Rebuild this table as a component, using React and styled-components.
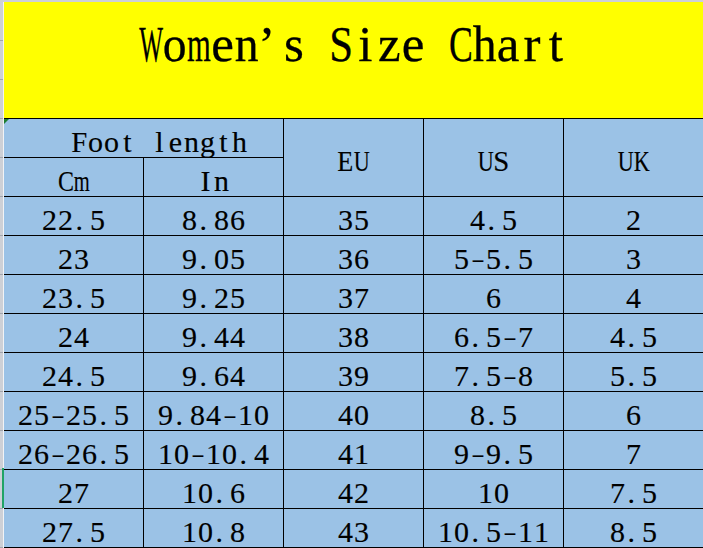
import React from "react";
import styled, { createGlobalStyle } from "styled-components";

const GlobalStyle = createGlobalStyle`
  html, body { margin: 0; padding: 0; background: #fff; }
  body { overflow: hidden; }
`;

// Liberation Serif (Times) advance widths, 1/1000 em
const ADV = {
  " ": 250, "’": 333, "-": 333, ".": 250,
  "0": 500, "1": 500, "2": 500, "3": 500, "4": 500, "5": 500, "6": 500, "7": 500, "8": 500, "9": 500,
  C: 667, E: 611, F: 556, I: 333, K: 722, S: 556, U: 722, W: 944,
  a: 444, e: 444, g: 500, h: 500, i: 278, l: 278, m: 778, n: 500, o: 500, r: 333, s: 389, t: 278, z: 444,
};

const Sheet = styled.div`
  width: 703px;
  height: 548px;
  overflow: hidden;
  display: flex;
  flex-direction: column;
  background: #fff;
  font-family: "Liberation Serif", "Times New Roman", serif;
  color: #000;
`;

const TopRule = styled.div`
  flex: none;
  height: 2px;
  background: #cdd0d6;
`;

const Body = styled.div`
  flex: 1;
  display: flex;
  min-height: 0;
`;

const Gutter = styled.div`
  position: relative;
  flex: none;
  width: 3px;
  border-right: 1px solid #f2f3f5;
  background: repeating-linear-gradient(to bottom, #cdd0d6 0 38px, #a3a6ad 38px 39px);
`;

const SelectionMark = styled.div`
  position: absolute;
  left: 2px;
  top: 466px;
  width: 2px;
  height: 40px;
  background: #21a366;
`;

const Content = styled.div`
  flex: 1;
  display: flex;
  flex-direction: column;
  min-width: 0;
`;

const TitleBar = styled.div`
  flex: none;
  height: 116px;
  box-sizing: border-box;
  padding-top: 17px;
  background: #ffff00;
  text-align: center;
  font-size: 51px;
  line-height: 51px;
  white-space: nowrap;
  -webkit-text-stroke: 0.3px #000;
`;

const Grid = styled.div`
  display: grid;
  grid-template-columns: repeat(5, 139px);
  grid-auto-rows: 38px;
  gap: 1px;
  padding: 1px 0;
  background: #000;
  width: max-content;
`;

const Cell = styled.div`
  position: relative;
  box-sizing: border-box;
  grid-column: span ${(p) => p.$cols || 1};
  grid-row: span ${(p) => p.$rows || 1};
  padding-top: ${(p) => (p.$pt ?? 8)}px;
  background: #9bc2e6;
  text-align: center;
  font-size: 30px;
  line-height: 30px;
  white-space: nowrap;
  -webkit-text-stroke: 0.15px #000;
`;

const ErrorFlag = styled.span`
  position: absolute;
  top: 0;
  left: 0;
  width: 0;
  height: 0;
  border-top: 5px solid #1d7d31;
  border-right: 5px solid transparent;
`;

const Glyph = styled.span`
  display: inline-flex;
  justify-content: ${(p) => p.$align || "center"};
  box-sizing: border-box;
  width: ${(p) => p.$w}px;
  padding-left: ${(p) => p.$pl || 0}px;
`;

const Ink = styled.span`
  display: inline-block;
  white-space: pre;
  transform: scale(${(p) => p.$sx}, ${(p) => p.$sy});
`;

function MonoText({ text, unit, size }) {
  return Array.from(text).map((ch, i) => {
    const leftAligned = ch === "’" || ch === ".";
    const adv = ((ADV[ch] ?? 500) / 1000) * size;
    let sx = Math.min(1, unit / adv);
    let sy = 1;
    if (ch === "-") {
      sx = 1.35;
      sy = 0.7;
    }
    sx = Math.round(sx * 1000) / 1000;
    return (
      <Glyph key={i} $w={unit} $align={leftAligned ? "flex-start" : "center"} $pl={ch === "." ? 2 : 0}>
        <Ink $sx={sx} $sy={sy}>{ch}</Ink>
      </Glyph>
    );
  });
}

const T = ({ children }) => <MonoText text={children} unit={16} size={30} />;

const rows = [
  ["22.5", "8.86", "35", "4.5", "2"],
  ["23", "9.05", "36", "5-5.5", "3"],
  ["23.5", "9.25", "37", "6", "4"],
  ["24", "9.44", "38", "6.5-7", "4.5"],
  ["24.5", "9.64", "39", "7.5-8", "5.5"],
  ["25-25.5", "9.84-10", "40", "8.5", "6"],
  ["26-26.5", "10-10.4", "41", "9-9.5", "7"],
  ["27", "10.6", "42", "10", "7.5"],
  ["27.5", "10.8", "43", "10.5-11", "8.5"],
];

export default function App() {
  return (
    <>
      <GlobalStyle />
      <Sheet>
        <TopRule />
        <Body>
          <Gutter>
            <SelectionMark />
          </Gutter>
          <Content>
            <TitleBar>
              <MonoText text="Women’s Size Chart" unit={23.8} size={51} />
            </TitleBar>
            <Grid>
              <Cell $cols={2}>
                <ErrorFlag />
                <T>{"  Foot length"}</T>
              </Cell>
              <Cell $rows={2} $pt={27}>
                <T>EU</T>
              </Cell>
              <Cell $rows={2} $pt={27}>
                <T>US</T>
              </Cell>
              <Cell $rows={2} $pt={27}>
                <T>UK</T>
              </Cell>
              <Cell>
                <T>Cm</T>
              </Cell>
              <Cell>
                <T>In</T>
              </Cell>
              {rows.map((r, ri) =>
                r.map((v, ci) => (
                  <Cell key={`${ri}-${ci}`}>
                    <T>{v}</T>
                  </Cell>
                ))
              )}
            </Grid>
          </Content>
        </Body>
      </Sheet>
    </>
  );
}
